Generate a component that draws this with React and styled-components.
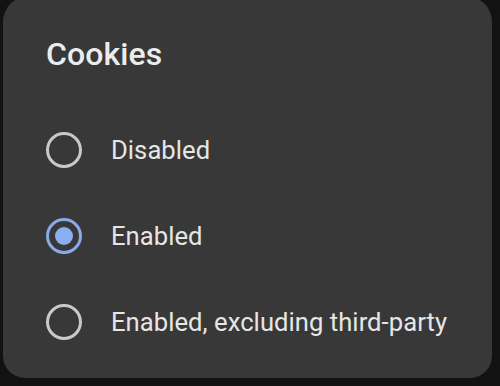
import styled, { createGlobalStyle } from 'styled-components'

const Global = createGlobalStyle`
  html, body {
    margin: 0;
    padding: 0;
    background: #121212;
    font-family: Roboto, "Noto Sans", sans-serif;
  }
`

const options = [
  { id: 'disabled', label: 'Disabled' },
  { id: 'enabled', label: 'Enabled' },
  { id: 'third', label: 'Enabled, excluding third-party' },
]

const App = () => {
  const selected = 'enabled'

  return (
    <Page>
      <Global />
      <Dialog>
        <Title>Cookies</Title>
        <List>
          {options.map((o) => (
            <Row key={o.id}>
              <Radio $checked={o.id === selected} />
              <Label>{o.label}</Label>
            </Row>
          ))}
        </List>
      </Dialog>
    </Page>
  )
}

const Page = styled.div`
  width: 500px;
  height: 386px;
  overflow: hidden;
  background: #121212;
`

const Dialog = styled.div`
  margin: -4px 0 0 3px;
  width: 489px;
  height: 382px;
  box-sizing: border-box;
  background: #383838;
  border-radius: 26px 26px 22px 22px;
  padding: 38px 0 0 43px;
  display: flex;
  flex-direction: column;
`

const Title = styled.h2`
  margin: 0;
  font-size: 32px;
  font-weight: 500;
  line-height: 40px;
  color: #ececec;
  letter-spacing: 0.1px;
`

const List = styled.div`
  margin-top: 58px;
  display: flex;
  flex-direction: column;
  gap: 50px;
`

const Row = styled.div`
  display: flex;
  align-items: center;
  height: 36px;
  gap: 29px;
`

const Radio = styled.span`
  position: relative;
  width: 36px;
  height: 36px;
  box-sizing: border-box;
  border-radius: 50%;
  border: 3.5px solid ${(p) => (p.$checked ? '#8aa9e8' : '#c9c9c9')};
  flex-shrink: 0;

  &::after {
    content: '';
    display: ${(p) => (p.$checked ? 'block' : 'none')};
    position: absolute;
    left: 50%;
    top: 50%;
    width: 18px;
    height: 18px;
    transform: translate(-50%, -50%);
    border-radius: 50%;
    background: #8aaef0;
  }
`

const Label = styled.span`
  font-size: 25.6px;
  color: #e6e6e6;
  letter-spacing: 0.05px;
`

export default App
